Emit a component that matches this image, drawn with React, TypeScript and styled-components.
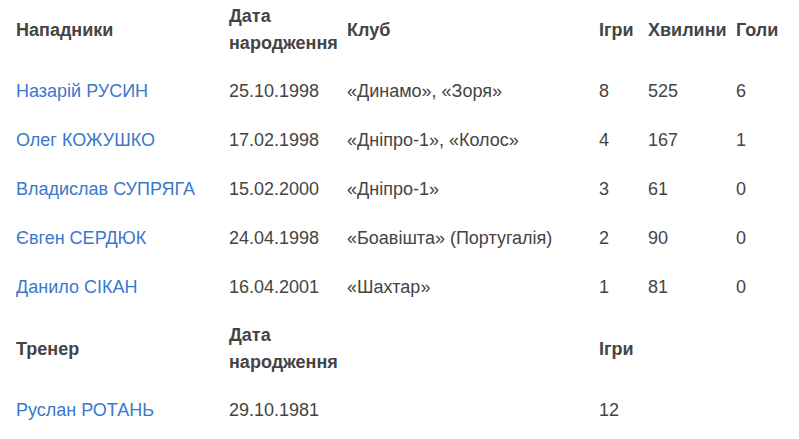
import React from "react";
import styled, { createGlobalStyle } from "styled-components";

const GlobalStyle = createGlobalStyle`
  html, body {
    margin: 0;
    padding: 0;
    background: #ffffff;
  }
  body {
    font-family: "Liberation Sans", Arial, Helvetica, sans-serif;
    color: #444444;
  }
`;

const Page = styled.div`
  padding: 0 8px;
`;

const Table = styled.table`
  width: 783px;
  margin-top: -7px;
  border-collapse: collapse;
  table-layout: fixed;
  font-size: 18px;
  color: #444444;
`;

const Th = styled.th`
  text-align: left;
  vertical-align: middle;
  font-weight: 700;
  line-height: 27px;
  padding: 10px 0 10px 8px;
  white-space: nowrap;
`;

const Td = styled.td`
  text-align: left;
  vertical-align: middle;
  font-weight: 400;
  line-height: 25px;
  padding: 12px 0 12px 8px;
  white-space: nowrap;
`;

const PlayerLink = styled.a`
  color: #3b78cc;
  text-decoration: none;
`;

type Player = {
  name: string;
  born: string;
  club: string;
  games: string;
  minutes: string;
  goals: string;
};

const forwards: Player[] = [
  { name: "Назарій РУСИН", born: "25.10.1998", club: "«Динамо», «Зоря»", games: "8", minutes: "525", goals: "6" },
  { name: "Олег КОЖУШКО", born: "17.02.1998", club: "«Дніпро-1», «Колос»", games: "4", minutes: "167", goals: "1" },
  { name: "Владислав СУПРЯГА", born: "15.02.2000", club: "«Дніпро-1»", games: "3", minutes: "61", goals: "0" },
  { name: "Євген СЕРДЮК", born: "24.04.1998", club: "«Боавішта» (Португалія)", games: "2", minutes: "90", goals: "0" },
  { name: "Данило СІКАН", born: "16.04.2001", club: "«Шахтар»", games: "1", minutes: "81", goals: "0" },
];

export default function App() {
  return (
    <>
      <GlobalStyle />
      <Page>
        <Table>
          <colgroup>
            <col style={{ width: 213 }} />
            <col style={{ width: 118 }} />
            <col style={{ width: 252 }} />
            <col style={{ width: 49 }} />
            <col style={{ width: 88 }} />
            <col style={{ width: 63 }} />
          </colgroup>
          <tbody>
            <tr>
              <Th>Нападники</Th>
              <Th>
                Дата
                <br />
                народження
              </Th>
              <Th>Клуб</Th>
              <Th>Ігри</Th>
              <Th>Хвилини</Th>
              <Th>Голи</Th>
            </tr>
            {forwards.map((p) => (
              <tr key={p.name}>
                <Td>
                  <PlayerLink href="#">{p.name}</PlayerLink>
                </Td>
                <Td>{p.born}</Td>
                <Td>{p.club}</Td>
                <Td>{p.games}</Td>
                <Td>{p.minutes}</Td>
                <Td>{p.goals}</Td>
              </tr>
            ))}
            <tr>
              <Th>Тренер</Th>
              <Th>
                Дата
                <br />
                народження
              </Th>
              <Th />
              <Th>Ігри</Th>
              <Th />
              <Th />
            </tr>
            <tr>
              <Td>
                <PlayerLink href="#">Руслан РОТАНЬ</PlayerLink>
              </Td>
              <Td>29.10.1981</Td>
              <Td />
              <Td>12</Td>
              <Td />
              <Td />
            </tr>
          </tbody>
        </Table>
      </Page>
    </>
  );
}
